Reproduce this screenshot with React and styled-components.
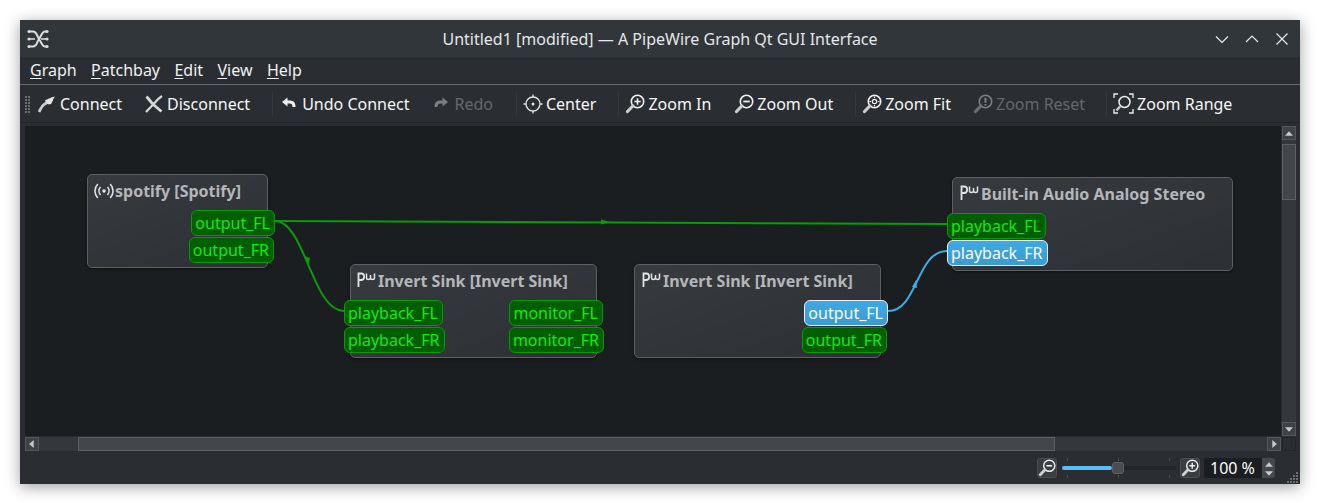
import React from 'react'
import styled, { createGlobalStyle } from 'styled-components'

const GlobalStyle = createGlobalStyle`
  html, body {
    margin: 0;
    background: #fff;
    overflow: hidden;
  }
  body {
    font-family: 'Noto Sans', sans-serif;
  }
`

const Window = styled.div`
  width: 1280px;
  height: 464px;
  margin: 20px;
  position: relative;
  background: #2a2e32;
  color: #fcfcfc;
  font-size: 16px;
  box-shadow: 0 3px 14px rgba(0, 0, 0, 0.38);
  display: flex;
  flex-direction: column;
`

const TitleBar = styled.div`
  height: 37px;
  flex: none;
  box-sizing: border-box;
  display: flex;
  align-items: center;
  justify-content: space-between;
  padding: 0 9px 0 7px;
  background: #31363b;
`

const Title = styled.div`
  flex: 1;
  text-align: center;
  font-size: 16px;
  color: #e6e7e8;
  padding-left: 58px;
`

const WindowButtons = styled.div`
  display: flex;
  gap: 12px;
`

const MenuBar = styled.div`
  height: 28px;
  flex: none;
  box-sizing: border-box;
  display: flex;
  align-items: center;
  gap: 14.4px;
  padding: 0 10px 1px;
  border-bottom: 1px solid #676a6d;
`

const MenuItem = styled.span`
  color: #f0f1f1;
  u {
    text-underline-offset: 2px;
  }
`

const ToolBar = styled.div`
  height: 38px;
  flex: none;
  box-sizing: border-box;
  display: flex;
  align-items: center;
  padding-left: 5px;
  border-bottom: 1px solid #232629;
`

const Grip = styled.div`
  width: 5px;
  height: 18px;
  margin-right: 7px;
  background: repeating-linear-gradient(0deg, #6b6f73 0 2px, transparent 2px 3px);
  mask-image: repeating-linear-gradient(90deg, #000 0 2px, transparent 2px 3px);
`

const ToolButton = styled.div`
  display: flex;
  align-items: center;
  gap: 3px;
  margin-right: ${(p) => p.$gap || 22}px;
  color: ${(p) => (p.$off ? '#63686d' : '#f5f6f6')};
  svg {
    opacity: ${(p) => (p.$off ? 0.42 : 1)};
  }
`

const Sep = styled.div`
  width: 1px;
  height: 24px;
  margin-right: 6px;
  background: #33383c;
`

const Body = styled.div`
  display: grid;
  grid-template-columns: 1fr 14px;
  grid-template-rows: 310px 14px;
  gap: 1px;
  margin-top: 3px;
  padding: 0 4px 1px 5px;
`

const Canvas = styled.div`
  position: relative;
  overflow: hidden;
  background: #1b1e20;
`

const Edges = styled.svg`
  position: absolute;
  left: 0;
  top: 0;
`

const Node = styled.div`
  position: absolute;
  left: ${(p) => p.$x}px;
  top: ${(p) => p.$y}px;
  width: ${(p) => p.$w}px;
  height: 94px;
  box-sizing: border-box;
  padding-left: ${(p) => p.$pad || 6}px;
  border: 1px solid #5d6064;
  border-radius: 5px;
  background: linear-gradient(160deg, #373b40, #2c3035);
  box-shadow: 0 1px 3px rgba(0, 0, 0, 0.5);
`

const NodeTitle = styled.div`
  height: 35px;
  display: flex;
  align-items: center;
  gap: 1px;
  font-size: 16px;
  font-weight: 700;
  color: #b4b6b8;
  padding-bottom: 4px;
  box-sizing: border-box;
`

const Ports = styled.div`
  display: flex;
  justify-content: space-between;
  margin-left: -12px;
  margin-right: -8px;
`

const PortColumn = styled.div`
  display: flex;
  flex-direction: column;
  gap: 1px;
  align-items: ${(p) => (p.$right ? 'flex-end' : 'flex-start')};
  margin-left: ${(p) => (p.$right ? 'auto' : 0)};
`

const Port = styled.div`
  height: 26px;
  box-sizing: border-box;
  display: flex;
  align-items: center;
  padding: 0 4px 0 3px;
  margin-right: ${(p) => p.$nudge || 0}px;
  border-radius: 6px;
  border: 1px solid ${(p) => (p.$active ? '#e4f1f9' : '#0a9a08')};
  background: ${(p) => (p.$active ? 'linear-gradient(#3fa9e2, #3a9bd2)' : '#015f01')};
  color: ${(p) => (p.$active ? '#fcfcfc' : '#16e816')};
  white-space: nowrap;
`

const VScroll = styled.div`
  display: flex;
  flex-direction: column;
  background: #34383c;
`

const HScroll = styled.div`
  display: flex;
  background: #34383c;
`

const ArrowButton = styled.div`
  flex: none;
  width: 14px;
  height: 14px;
  box-sizing: border-box;
  display: flex;
  align-items: center;
  justify-content: center;
  background: #3f4347;
  border: 1px solid #54585b;
`

const VThumb = styled.div`
  width: 14px;
  height: 56px;
  margin-top: 4px;
  box-sizing: border-box;
  background: #43474b;
  border: 1px solid #5c6064;
`

const HThumb = styled.div`
  height: 14px;
  width: 977px;
  margin-left: 39px;
  box-sizing: border-box;
  background: #43474b;
  border: 1px solid #5c6064;
`

const Spacer = styled.div`
  flex: 1;
`

const Corner = styled.div`
  background: #2a2e32;
  border: 1px solid #232629;
  box-sizing: border-box;
`

const StatusBar = styled.div`
  flex: 1;
  display: flex;
  align-items: center;
  padding: 0 25px 0 0;
  justify-content: flex-end;
`

const ZoomButton = styled.div`
  width: 20px;
  height: 20px;
  box-sizing: border-box;
  display: flex;
  align-items: center;
  justify-content: center;
  border: 1px solid #4b4f53;
  border-radius: 3px;
  background: #3a3e42;
`

const Slider = styled.div`
  position: relative;
  width: 114px;
  height: 20px;
  margin: 0 4px 0 5px;
  display: flex;
  align-items: center;
`

const SliderTrack = styled.div`
  flex: 1;
  height: 4px;
  border-radius: 2px;
  background: #232629;
`

const SliderFill = styled.div`
  height: 100%;
  border-radius: 2px;
  background: #5cbdf2;
`

const SliderHandle = styled.div`
  position: absolute;
  left: 50px;
  top: 4px;
  width: 12px;
  height: 12px;
  box-sizing: border-box;
  border-radius: 3px;
  background: #494d51;
  border: 1px solid #5d6165;
`

const Tick = styled.div`
  position: absolute;
  left: ${(p) => p.$x}px;
  top: ${(p) => p.$y}px;
  width: 1px;
  height: 3px;
  background: #4b4f53;
`

const Spin = styled.div`
  width: 71px;
  height: 20px;
  margin-left: 4px;
  display: flex;
`

const SpinValue = styled.div`
  flex: 1;
  background: #1b1e20;
  border-radius: 3px 0 0 3px;
  padding-left: 6px;
  line-height: 21px;
  font-size: 16px;
  color: #fcfcfc;
`

const SpinButtons = styled.div`
  width: 13px;
  display: flex;
  flex-direction: column;
  align-items: center;
  justify-content: center;
  gap: 1px;
  background: #45494d;
  border-radius: 0 3px 3px 0;
`

const SizeGrip = styled.svg`
  position: absolute;
  right: 1px;
  bottom: 1px;
`

const AppLogo = () => (
  <svg width="22" height="20" viewBox="0 0 22 20" fill="none" stroke="#dcdddd">
    <path d="M3 2.500h3c4 0 4 5 6 7.500s3 7.500 6 7.500h2M3 17.500h3c4 0 4-5 6-7.500s3-7.500 6-7.500h2" strokeWidth="2" />
    <path d="M3 10h5M14 10h6" strokeWidth="1.600" />
    <g fill="#dcdddd" stroke="none">
      <circle cx="2" cy="2.500" r="1.600" />
      <circle cx="2" cy="10" r="1.600" />
      <circle cx="2" cy="17.500" r="1.600" />
      <circle cx="20" cy="2.500" r="1.600" />
      <circle cx="20" cy="10" r="1.600" />
      <circle cx="20" cy="17.500" r="1.600" />
    </g>
  </svg>
)

const Chevron = ({ d }) => (
  <svg width="18" height="18" viewBox="0 0 18 18" fill="none" stroke="#e8e9e9" strokeWidth="1.200">
    <path d={d} />
  </svg>
)

const ConnectIcon = () => (
  <svg width="20" height="20" viewBox="0 0 20 20" fill="none">
    <path d="M2 18c1.500-2.500 2.500-6 5-7.500 2-1 3-2 4-3" stroke="#c9cacb" strokeWidth="2.800" />
    <path d="M8 6.500c2-1 4-2.500 10-4-2 2-2.500 6-4 7.500-2 1-4.500 0-6-3.500z" fill="#e2e3e3" />
  </svg>
)

const DisconnectIcon = () => (
  <svg width="20" height="20" viewBox="0 0 20 20" fill="none" stroke="#d6d7d8">
    <path d="M2.500 2.500l5 6 3 3 7 6" strokeWidth="2.800" />
    <path d="M18 2c-3 2-5 4-7 6.500L2 18" strokeWidth="2.200" />
  </svg>
)

const UndoIcon = ({ flip }) => (
  <svg width="20" height="20" viewBox="0 0 20 20" style={flip ? { transform: 'scaleX(-1)' } : undefined}>
    <path d="M3 8l5.500-4.500V6.500h2c4 0 6 2 6 6.500h-3c0-2.500-1-3.500-3-3.500h-2v3z" fill="#eeeeef" />
  </svg>
)

const CenterIcon = () => (
  <svg width="20" height="20" viewBox="0 0 20 20" fill="none" stroke="#e4e5e5" strokeWidth="1.300">
    <circle cx="10" cy="10" r="7" />
    <circle cx="10" cy="10" r="1.500" fill="#e4e5e5" stroke="none" />
    <path d="M10 0.500v2.500M10 17v2.500M0.500 10H3M17 10h2.500" />
  </svg>
)

const Magnifier = ({ kind, size = 20 }) => (
  <svg width={size} height={size} viewBox="0 0 20 20" fill="none" stroke="#f0f0f1">
    <circle cx="12.500" cy="7.500" r="6.200" strokeWidth="1.600" />
    <path d="M7.800 12L2.500 17.500" stroke="#cdcecf" strokeWidth="3.200" strokeLinecap="round" />
    {kind === 'plus' && <path d="M12.500 4.300v6.400M9.300 7.500h6.400" strokeWidth="1.600" />}
    {kind === 'minus' && <path d="M9.300 7.500h6.400" strokeWidth="1.800" />}
    {kind === 'fit' && (
      <g strokeWidth="1.200">
        <circle cx="12.500" cy="7.500" r="2.200" />
        <path d="M12.500 2.500v1.500M12.500 11v1.500M7.500 7.500H9M16 7.500h1.500" />
      </g>
    )}
    {kind === 'reset' && <path d="M12.500 3.800v5M12.500 10v1.400" strokeWidth="2" />}
  </svg>
)

const RangeIcon = () => (
  <svg width="21" height="21" viewBox="0 0 21 21" fill="none" stroke="#eeeeef" strokeWidth="1.300">
    <path d="M1 5V1h4M16 1h4v4M1 16v4h4M16 20h4v-4" />
    <circle cx="11.500" cy="9" r="5.500" strokeWidth="1.500" />
    <path d="M7 13.500L3.500 17.500" stroke="#cdcecf" strokeWidth="2.400" />
  </svg>
)

const PwIcon = () => (
  <svg width="21" height="20" viewBox="0 0 21 20" fill="none" stroke="#e2e3e3" strokeWidth="1.800">
    <path d="M2.500 16V2.500h2.500c4.200 0 4.200 6.500 0 6.500H2.500" />
    <path d="M10.500 2.500v4.500c0 2 3.500 2 4 0v-3v3c.5 2 4 2 4 0V2.500" strokeWidth="1.500" />
  </svg>
)

const BroadcastIcon = () => (
  <svg width="20" height="20" viewBox="0 0 20 20" fill="none" stroke="#e0e1e1" strokeWidth="1.600">
    <circle cx="10" cy="10" r="1.800" fill="#e0e1e1" stroke="none" />
    <path d="M6.500 6c-2 2.300-2 5.700 0 8M13.500 6c2 2.300 2 5.700 0 8" />
    <path d="M3.800 3c-3.800 4-3.800 10 0 14M16.200 3c3.800 4 3.800 10 0 14" />
  </svg>
)

const Tri = ({ dir, size = 8 }) => {
  const d = { up: 'M0 6L3.500 2L7 6z', down: 'M0 2L3.500 6L7 2z', left: 'M5 0L1 3.500L5 7z', right: 'M2 0L6 3.500L2 7z' }[dir]
  return (
    <svg width={size} height={size} viewBox="0 0 7 7">
      <path d={d} fill="#c9cacb" />
    </svg>
  )
}

const tools = [
  { icon: <ConnectIcon />, label: 'Connect' },
  { icon: <DisconnectIcon />, label: 'Disconnect' },
  'sep',
  { icon: <UndoIcon />, label: 'Undo Connect' },
  { icon: <UndoIcon flip />, label: 'Redo', off: true, gap: 23 },
  'sep',
  { icon: <CenterIcon />, label: 'Center' },
  'sep',
  { icon: <Magnifier kind="plus" />, label: 'Zoom In', gap: 23 },
  { icon: <Magnifier kind="minus" />, label: 'Zoom Out' },
  'sep',
  { icon: <Magnifier kind="fit" />, label: 'Zoom Fit' },
  { icon: <Magnifier kind="reset" />, label: 'Zoom Reset', off: true, gap: 21 },
  'sep',
  { icon: <RangeIcon />, label: 'Zoom Range' },
]

const menus = ['Graph', 'Patchbay', 'Edit', 'View', 'Help']

const App = () => {
  return (
    <>
      <GlobalStyle />
      <Window>
        <TitleBar>
          <AppLogo />
          <Title>Untitled1 [modified] — A PipeWire Graph Qt GUI Interface</Title>
          <WindowButtons>
            <Chevron d="M3 6.500l6 6 6-6" />
            <Chevron d="M3 12l6-6 6 6" />
            <Chevron d="M3.500 3.500l11 11M14.500 3.500l-11 11" />
          </WindowButtons>
        </TitleBar>
        <MenuBar>
          {menus.map((m) => (
            <MenuItem key={m}>
              <u>{m[0]}</u>
              {m.slice(1)}
            </MenuItem>
          ))}
        </MenuBar>
        <ToolBar>
          <Grip />
          {tools.map((t, i) =>
            t === 'sep' ? (
              <Sep key={i} />
            ) : (
              <ToolButton key={t.label} $off={t.off} $gap={t.gap}>
                {t.icon}
                {t.label}
              </ToolButton>
            )
          )}
        </ToolBar>
        <Body>
          <Canvas>
            <Edges width="1256" height="310" viewBox="25 126 1256 310" fill="none">
              <path d="M275 221C330 221 890 224 947 224" stroke="#0a9a0a" strokeWidth="2" />
              <path d="M275 221C305 221 312 311 344 311" stroke="#0a9a0a" strokeWidth="2" />
              <path d="M888 311C918 311 916 251 947 251" stroke="#3daee9" strokeWidth="2" />
              <path d="M601 219.500L610 222L601 224.500z" fill="#0a9a0a" />
              <path d="M304.500 256L310 258L308.500 265z" fill="#0a9a0a" />
              <path d="M912 287L917 288L916 280z" fill="#3daee9" />
            </Edges>

            <Node $x={62} $y={48} $w={181}>
              <NodeTitle>
                <BroadcastIcon />
                spotify [Spotify]
              </NodeTitle>
              <Ports>
                <PortColumn $right>
                  <Port>output_FL</Port>
                  <Port $nudge={1}>output_FR</Port>
                </PortColumn>
              </Ports>
            </Node>

            <Node $x={325} $y={138} $w={247} $pad={5}>
              <NodeTitle>
                <PwIcon />
                Invert Sink [Invert Sink]
              </NodeTitle>
              <Ports>
                <PortColumn>
                  <Port>playback_FL</Port>
                  <Port>playback_FR</Port>
                </PortColumn>
                <PortColumn $right>
                  <Port $nudge={1}>monitor_FL</Port>
                  <Port>monitor_FR</Port>
                </PortColumn>
              </Ports>
            </Node>

            <Node $x={609} $y={138} $w={247}>
              <NodeTitle>
                <PwIcon />
                Invert Sink [Invert Sink]
              </NodeTitle>
              <Ports>
                <PortColumn $right>
                  <Port $active>output_FL</Port>
                  <Port $nudge={1}>output_FR</Port>
                </PortColumn>
              </Ports>
            </Node>

            <Node $x={927} $y={51} $w={281}>
              <NodeTitle>
                <PwIcon />
                Built-in Audio Analog Stereo
              </NodeTitle>
              <Ports>
                <PortColumn>
                  <Port>playback_FL</Port>
                  <Port $active>playback_FR</Port>
                </PortColumn>
              </Ports>
            </Node>
          </Canvas>

          <VScroll>
            <ArrowButton>
              <Tri dir="up" />
            </ArrowButton>
            <VThumb />
            <Spacer />
            <ArrowButton>
              <Tri dir="down" />
            </ArrowButton>
          </VScroll>

          <HScroll>
            <ArrowButton>
              <Tri dir="left" />
            </ArrowButton>
            <HThumb />
            <Spacer />
            <ArrowButton>
              <Tri dir="right" />
            </ArrowButton>
          </HScroll>
          <Corner />
        </Body>

        <StatusBar>
          <ZoomButton>
            <Magnifier kind="minus" size={18} />
          </ZoomButton>
          <Slider>
            <Tick $x={5} $y={0} />
            <Tick $x={56} $y={0} />
            <Tick $x={107} $y={0} />
            <Tick $x={5} $y={17} />
            <Tick $x={56} $y={17} />
            <Tick $x={107} $y={17} />
            <SliderTrack>
              <SliderFill style={{ width: '44%' }} />
            </SliderTrack>
            <SliderHandle />
          </Slider>
          <ZoomButton>
            <Magnifier kind="plus" size={18} />
          </ZoomButton>
          <Spin>
            <SpinValue>100 %</SpinValue>
            <SpinButtons>
              <Tri dir="up" />
              <Tri dir="down" />
            </SpinButtons>
          </Spin>
        </StatusBar>
        <SizeGrip width="12" height="12" viewBox="0 0 12 12" fill="#6a6e72">
          <rect x="9" y="1" width="2" height="2" />
          <rect x="6" y="4" width="2" height="2" />
          <rect x="9" y="4" width="2" height="2" />
          <rect x="3" y="7" width="2" height="2" />
          <rect x="6" y="7" width="2" height="2" />
          <rect x="9" y="7" width="2" height="2" />
          <rect x="0" y="10" width="2" height="2" />
          <rect x="3" y="10" width="2" height="2" />
          <rect x="6" y="10" width="2" height="2" />
          <rect x="9" y="10" width="2" height="2" />
        </SizeGrip>
      </Window>
    </>
  )
}

export default App
